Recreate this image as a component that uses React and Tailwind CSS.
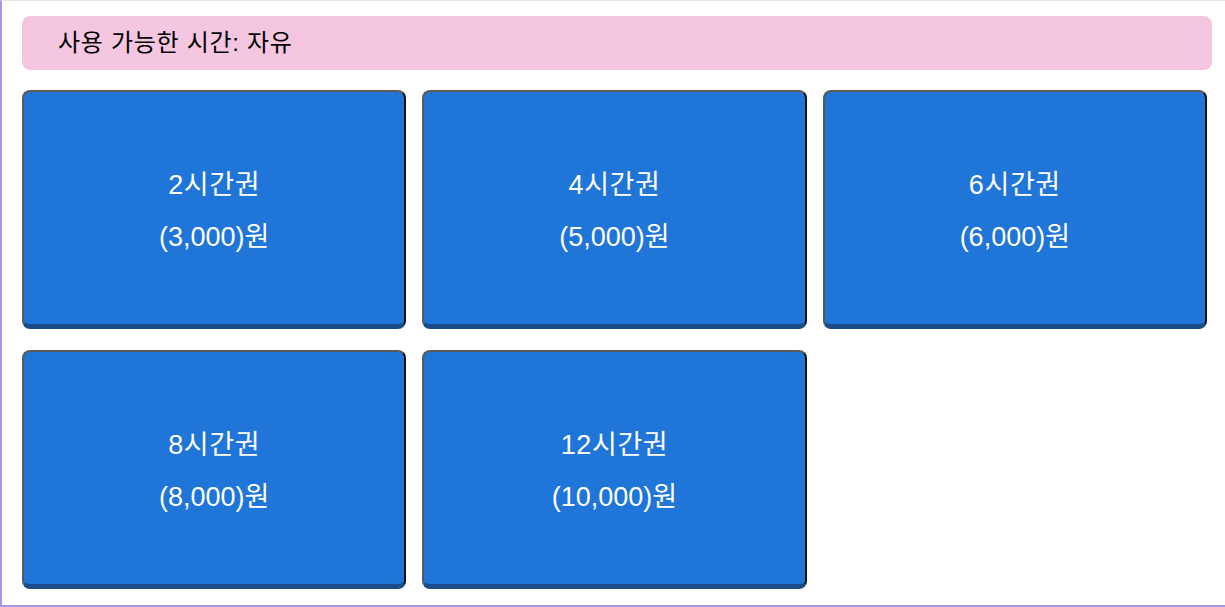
const tickets = [
  { hours: '2시간권', price: '(3,000)원' },
  { hours: '4시간권', price: '(5,000)원' },
  { hours: '6시간권', price: '(6,000)원' },
  { hours: '8시간권', price: '(8,000)원' },
  { hours: '12시간권', price: '(10,000)원' },
];

const TicketButton = ({ hours, price }) => (
  <button
    type="button"
    className="h-[239px] w-full rounded-[8px] bg-[#2075d8] text-white text-[27px] leading-[52px] border-2 border-t-[#5a5a5a] border-l-[#5a5a5a] border-r-[#111] border-b-[5px] border-b-[#1b4c8a] flex flex-col items-center justify-center pt-[6px]"
  >
    <span className="tracking-[0.6px]">{hours}</span>
    <span>{price}</span>
  </button>
);

export default function App() {
  return (
    <div
      className="w-[1225px] h-[607px] bg-white border-t border-t-[#e6e6e6] border-l-2 border-l-[#a895f0] border-b-2 border-b-[#a895f0] pl-[20px] pr-[13px] pt-[15px]"
      style={{ fontFamily: '"Liberation Sans", "Noto Sans CJK KR", sans-serif' }}
    >
      <div className="h-[54px] rounded-[8px] bg-[#f5c6e0] flex items-center pl-[36px] text-[24px] tracking-[0.7px] text-black">
        사용 가능한 시간: 자유
      </div>
      <div className="mt-[20px] w-[1185px] grid grid-cols-3 gap-x-[16px] gap-y-[21px]">
        {tickets.map((t) => (
          <TicketButton key={t.hours} {...t} />
        ))}
      </div>
    </div>
  );
}
